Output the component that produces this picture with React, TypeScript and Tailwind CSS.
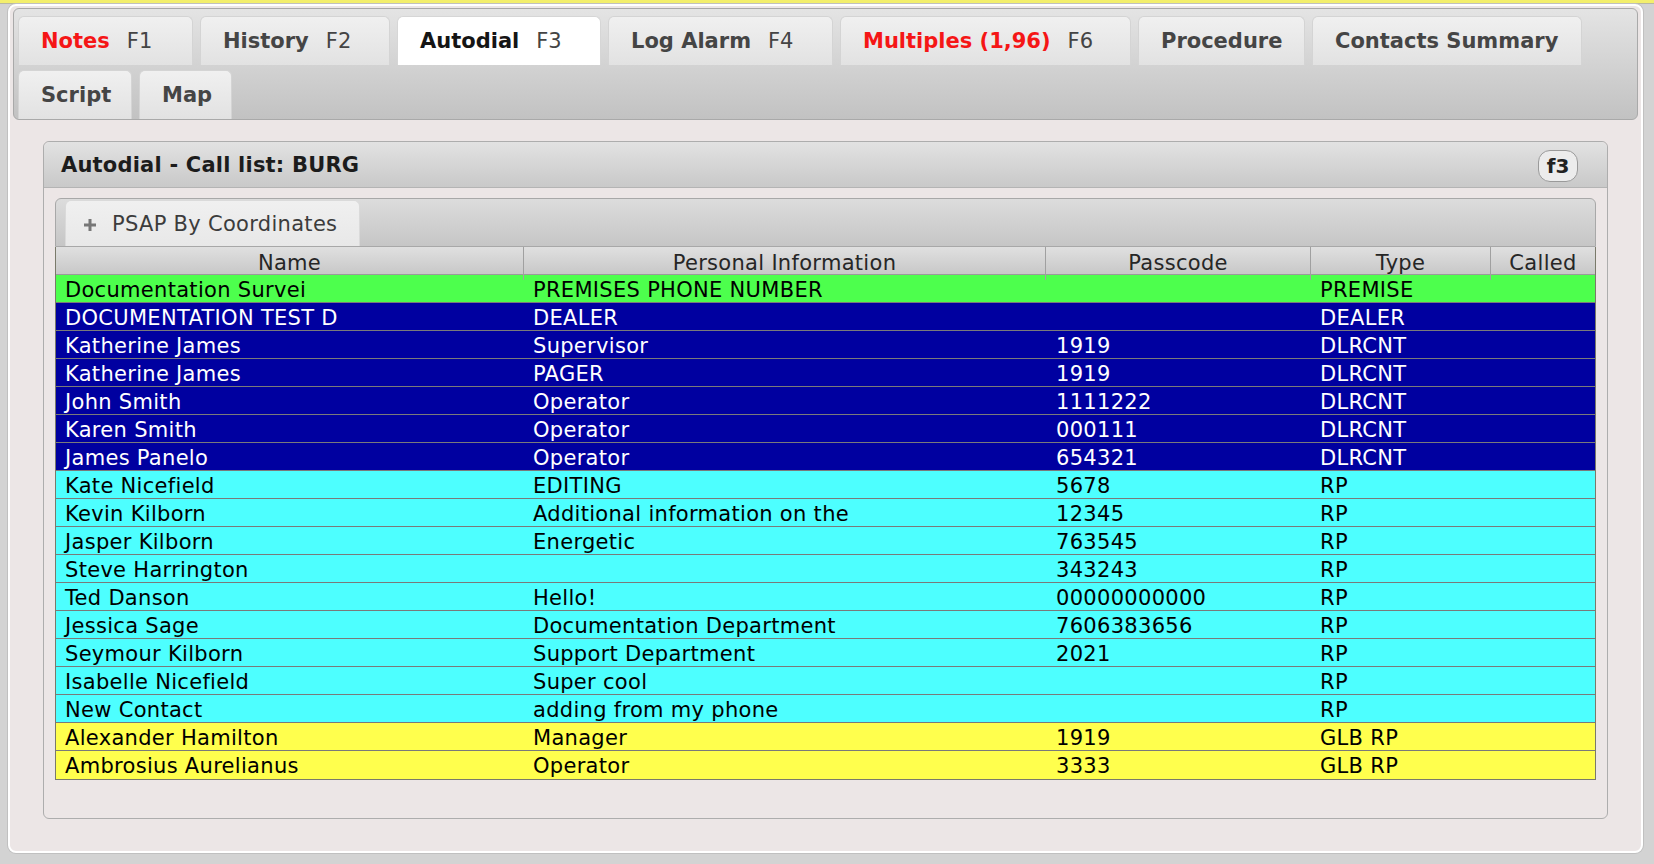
const tabsRow = [
	{ label: "Notes", key: "F1", red: true, w: "w-[175px]" },
	{ label: "History", key: "F2", w: "w-[190px]" },
	{ label: "Autodial", key: "F3", active: true, w: "w-[204px]" },
	{ label: "Log Alarm", key: "F4", w: "w-[225px]" },
	{ label: "Multiples (1,96)", key: "F6", red: true, w: "w-[291px]" },
	{ label: "Procedure", key: "", w: "w-[167px]" },
	{ label: "Contacts Summary", key: "", w: "w-[270px]" },
	{ label: "Script", key: "", w: "w-[114px]" },
	{ label: "Map", key: "", w: "w-[93px]" },
];

type Kind = "green" | "blue" | "cyan" | "yellow";

const rows: { name: string; info: string; pass: string; type: string; kind: Kind }[] = [
	{ name: "Documentation Survei", info: "PREMISES PHONE NUMBER", pass: "", type: "PREMISE", kind: "green" },
	{ name: "DOCUMENTATION TEST D", info: "DEALER", pass: "", type: "DEALER", kind: "blue" },
	{ name: "Katherine James", info: "Supervisor", pass: "1919", type: "DLRCNT", kind: "blue" },
	{ name: "Katherine James", info: "PAGER", pass: "1919", type: "DLRCNT", kind: "blue" },
	{ name: "John Smith", info: "Operator", pass: "1111222", type: "DLRCNT", kind: "blue" },
	{ name: "Karen Smith", info: "Operator", pass: "000111", type: "DLRCNT", kind: "blue" },
	{ name: "James Panelo", info: "Operator", pass: "654321", type: "DLRCNT", kind: "blue" },
	{ name: "Kate Nicefield", info: "EDITING", pass: "5678", type: "RP", kind: "cyan" },
	{ name: "Kevin Kilborn", info: "Additional information on the", pass: "12345", type: "RP", kind: "cyan" },
	{ name: "Jasper Kilborn", info: "Energetic", pass: "763545", type: "RP", kind: "cyan" },
	{ name: "Steve Harrington", info: "", pass: "343243", type: "RP", kind: "cyan" },
	{ name: "Ted Danson", info: "Hello!", pass: "00000000000", type: "RP", kind: "cyan" },
	{ name: "Jessica Sage", info: "Documentation Department", pass: "7606383656", type: "RP", kind: "cyan" },
	{ name: "Seymour Kilborn", info: "Support Department", pass: "2021", type: "RP", kind: "cyan" },
	{ name: "Isabelle Nicefield", info: "Super cool", pass: "", type: "RP", kind: "cyan" },
	{ name: "New Contact", info: "adding from my phone", pass: "", type: "RP", kind: "cyan" },
	{ name: "Alexander Hamilton", info: "Manager", pass: "1919", type: "GLB RP", kind: "yellow" },
	{ name: "Ambrosius Aurelianus", info: "Operator", pass: "3333", type: "GLB RP", kind: "yellow" },
];

const rowColors: Record<Kind, string> = {
	green: "bg-[#4dff4d] text-black",
	blue: "bg-[#0000a0] text-white",
	cyan: "bg-[#4dffff] text-black",
	yellow: "bg-[#ffff4d] text-black",
};

const cols = "grid grid-cols-[468px_522px_265px_180px_1fr]";

export default function App() {
	return (
		<div className="min-h-[864px] bg-[#d3d3d3] font-['DejaVu_Sans',sans-serif]">
			<div className="h-[3px] bg-[#f3ef6c]" />
			<div className="h-px bg-[#b8b8a0]" />
			<div className="ml-[8px] w-[1635px] h-[849px] rounded-[8px] border-2 border-white bg-[#ece6e6] px-[3px] pt-[2px] shadow-[0_0_0_1px_#c0c0c0]">
				{/* Tab bar */}
				<div className="rounded-[6px] border border-[#a9a9a9] bg-gradient-to-b from-[#e4e4e4] to-[#c2c2c2] px-[4px] pt-[7px]">
					<div className="flex flex-wrap gap-x-[7px] gap-y-[5px]">
						{tabsRow.map((t) => (
							<div
								key={t.label}
								className={`${t.w} h-[49px] flex items-center px-[22px] pt-[2px] rounded-t-[6px] border border-b-0 text-[21px] whitespace-nowrap ${
									t.active
										? "bg-white border-[#d6d6d6]"
										: "bg-gradient-to-b from-[#f0f0f0] to-[#e2e2e2] border-[#d4d4d4]"
								}`}
							>
								<span
									className={`font-bold ${
										t.red ? "text-[#f51616]" : t.active ? "text-[#151515]" : "text-[#454545]"
									}`}
								>
									{t.label}
								</span>
								{t.key && <span className="ml-[17px] text-[#444]">{t.key}</span>}
							</div>
						))}
					</div>
				</div>

				{/* Content */}
				<div className="px-[30px] pt-[21px]">
					<div className="rounded-[6px] border border-[#adadad] bg-[#ece6e6] pb-[38px]">
						<div className="h-[46px] flex items-center justify-between rounded-t-[6px] border-b border-[#b4b4b4] bg-gradient-to-b from-[#e2e2e2] to-[#c9c9c9] pl-[17px] pr-[29px] pt-[3px]">
							<span className="text-[21px] font-bold text-[#1c1c1c] tracking-[0.2px]">
								Autodial - Call list: BURG
							</span>
							<span className="w-[40px] h-[32px] flex items-center justify-center rounded-[12px] border border-[#9a9a9a] bg-[#ececec] text-[20px] font-bold text-[#222]">
								f3
							</span>
						</div>

						<div className="mx-[11px] mt-[10px] tracking-[0.3px]">
							{/* Toolbar */}
							<div className="h-[49px] rounded-t-[6px] border border-[#a8a8a8] bg-gradient-to-b from-[#dcdcdc] to-[#c6c6c6] pl-[9px] pt-px">
								<button className="h-[46px] w-[295px] flex items-center rounded-t-[6px] border border-b-0 border-[#dadada] bg-gradient-to-b from-[#f0f0f0] to-[#e8e8e8] pl-[16px] pt-[2px] text-[21px] text-[#3c3c3c]">
									<svg width="16" height="16" viewBox="0 0 16 16" className="mr-[14px]">
										<path d="M8 2v12M2 8h12" stroke="#777" strokeWidth="3" />
									</svg>
									PSAP By Coordinates
								</button>
							</div>

							{/* Table */}
							<div className="border-x border-b border-[#7a7a6a] text-[21px]">
								<div className={`${cols} h-[28px] bg-gradient-to-b from-[#e0e0e0] to-[#c8c8c8] text-[#262626] border-b border-[#9a9a9a]`}>
									{["Name", "Personal Information", "Passcode", "Type", "Called"].map((h, i) => (
										<div
											key={h}
											className={`flex items-center justify-center pt-px ${
												i < 4 ? "border-r border-[#a0a0a0]" : ""
											}`}
										>
											{h}
										</div>
									))}
								</div>
								{rows.map((r, i) => (
									<div
										key={i}
										className={`${cols} h-[28px] leading-[30px] overflow-hidden ${rowColors[r.kind]} ${
											i < rows.length - 1 ? "border-b border-[#7a7a7a]" : ""
										}`}
									>
										<div className="pl-[9px] whitespace-nowrap overflow-hidden">{r.name}</div>
										<div className="pl-[9px] whitespace-nowrap overflow-hidden">{r.info}</div>
										<div className="pl-[10px]">{r.pass}</div>
										<div className="pl-[9px]">{r.type}</div>
										<div />
									</div>
								))}
							</div>
						</div>
					</div>
				</div>
			</div>
		</div>
	);
}
